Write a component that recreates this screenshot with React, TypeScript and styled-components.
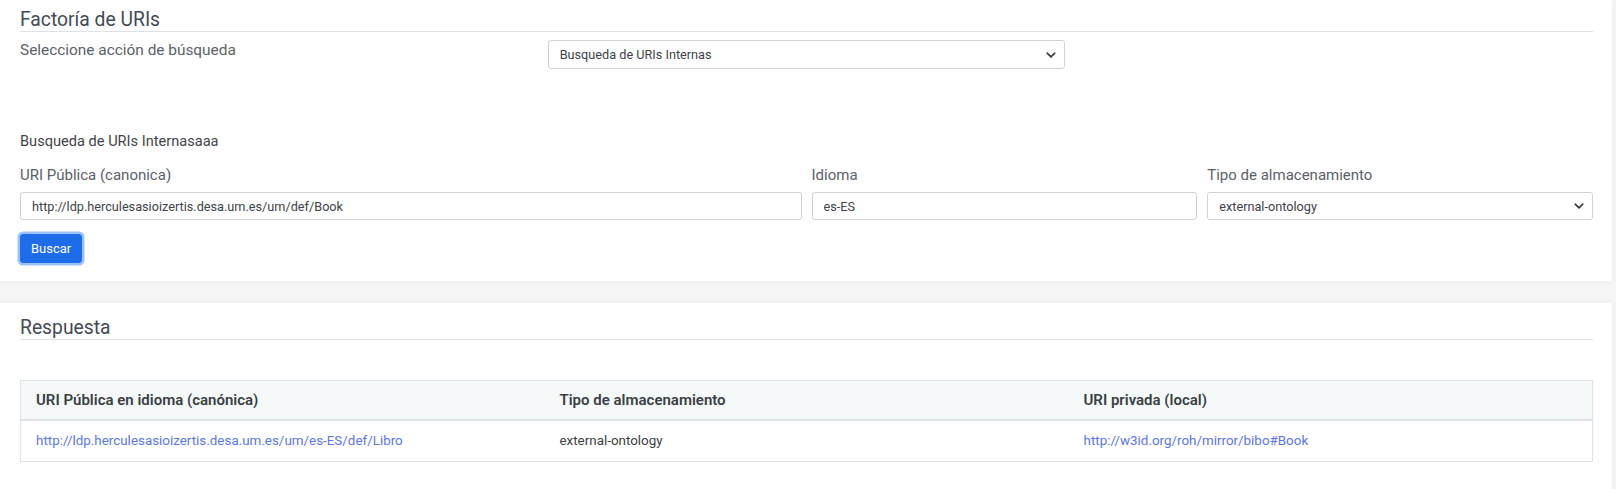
import React from "react";
import styled, { createGlobalStyle } from "styled-components";

const GlobalStyle = createGlobalStyle`
  html, body { margin: 0; padding: 0; }
  body {
    background: #f6f6f6;
    font-family: Roboto, "Liberation Sans", Arial, sans-serif;
    color: #495057;
  }
  * { box-sizing: border-box; }
`;

const Page = styled.div`
  display: flex;
  flex-direction: column;
  gap: 22px;
  padding-right: 4px;
`;

const Card = styled.section<{ $pt: number; $pb: number }>`
  background: #fff;
  box-shadow: 0 0 12px rgba(0, 0, 0, 0.045);
  padding: ${(p) => p.$pt}px 19px ${(p) => p.$pb}px 20px;
`;

const Heading = styled.h2`
  margin: 0;
  font-size: 19.3px;
  font-weight: 400;
  line-height: 20px;
  padding-bottom: 1px;
  color: #434b54;
  border-bottom: 1px solid #dfe2e5;
`;

const Row = styled.div<{ $mt?: number }>`
  display: flex;
  margin: ${(p) => p.$mt ?? 0}px -5px 0;
`;

const Col = styled.div<{ $span: number }>`
  flex: 0 0 ${(p) => (p.$span / 12) * 100}%;
  max-width: ${(p) => (p.$span / 12) * 100}%;
  padding: 0 5px;
`;

const ActionLabel = styled.div`
  font-size: 15.4px;
  line-height: 20px;
  color: #5a6169;
`;

const SelectWrap = styled.div`
  position: relative;
`;

const Select = styled.select<{ $h: number }>`
  appearance: none;
  width: 100%;
  height: ${(p) => p.$h}px;
  border: 1px solid #ced4da;
  border-radius: 3px;
  background: #fff;
  padding: 0 30px 0 11px;
  font-family: inherit;
  font-size: 12.7px;
  color: #3d434a;
  outline: none;
`;

const Chevron = styled.svg`
  position: absolute;
  right: 9px;
  top: 50%;
  width: 10px;
  height: 10px;
  transform: translateY(-50%);
  pointer-events: none;
`;

const SubTitle = styled.div`
  margin-top: 64px;
  font-size: 14.6px;
  line-height: 17px;
  color: #3f454b;
`;

const FieldLabel = styled.label`
  display: block;
  font-size: 15px;
  line-height: 20px;
  color: #5a6169;
  margin-bottom: 7px;
`;

const Input = styled.input`
  width: 100%;
  height: 28px;
  border: 1px solid #ced4da;
  border-radius: 3px;
  padding: 0 11px;
  font-family: inherit;
  font-size: 12.7px;
  color: #3d434a;
  outline: none;
  background: #fff;
`;

const Button = styled.button`
  margin-top: 14px;
  height: 29px;
  padding: 0 10px;
  background: #1d6ce9;
  color: #fff;
  border: 1px solid #1d6ce9;
  border-radius: 3px;
  font-family: inherit;
  font-size: 13px;
  box-shadow: 0 0 0 2.5px #9ec2f8;
  cursor: pointer;
`;

const Table = styled.table`
  margin-top: 40px;
  width: 100%;
  border-collapse: collapse;
  border: 1px solid #dee2e6;
  table-layout: fixed;
`;

const Th = styled.th`
  text-align: left;
  font-size: 15px;
  font-weight: 600;
  color: #3a3f44;
  background: #f6f9fa;
  height: 39px;
  padding: 0 15px;
  border-bottom: 2px solid #dee2e6;
`;

const Td = styled.td`
  height: 42px;
  padding: 0 15px;
  color: #3a3f44;
  font-size: 13.4px;
`;

const Link = styled.a`
  color: #5d76e6;
  text-decoration: none;
`;

const ChevronIcon = () => (
  <Chevron viewBox="0 0 16 16">
    <path
      d="M2 5l6 6 6-6"
      fill="none"
      stroke="#343a40"
      strokeWidth="2.6"
      strokeLinecap="round"
      strokeLinejoin="round"
    />
  </Chevron>
);

export default function App() {
  return (
    <>
      <GlobalStyle />
      <Page>
        <Card $pt={10} $pb={18}>
          <Heading>Factoría de URIs</Heading>
          <Row $mt={8}>
            <Col $span={4}>
              <ActionLabel>Seleccione acción de búsqueda</ActionLabel>
            </Col>
            <Col $span={4}>
              <SelectWrap>
                <Select $h={29} defaultValue="internas">
                  <option value="internas">Busqueda de URIs Internas</option>
                </Select>
                <ChevronIcon />
              </SelectWrap>
            </Col>
          </Row>
          <SubTitle>Busqueda de URIs Internasaaa</SubTitle>
          <Row $mt={15}>
            <Col $span={6}>
              <FieldLabel>URI Pública (canonica)</FieldLabel>
              <Input readOnly defaultValue="http://ldp.herculesasioizertis.desa.um.es/um/def/Book" />
            </Col>
            <Col $span={3}>
              <FieldLabel>Idioma</FieldLabel>
              <Input readOnly defaultValue="es-ES" />
            </Col>
            <Col $span={3}>
              <FieldLabel>Tipo de almacenamiento</FieldLabel>
              <SelectWrap>
                <Select $h={28} defaultValue="ext">
                  <option value="ext">external-ontology</option>
                </Select>
                <ChevronIcon />
              </SelectWrap>
            </Col>
          </Row>
          <Button type="button">Buscar</Button>
        </Card>
        <Card $pt={15} $pb={40}>
          <Heading>Respuesta</Heading>
          <Table>
            <thead>
              <tr>
                <Th>URI Pública en idioma (canónica)</Th>
                <Th>Tipo de almacenamiento</Th>
                <Th>URI privada (local)</Th>
              </tr>
            </thead>
            <tbody>
              <tr>
                <Td>
                  <Link href="#">http://ldp.herculesasioizertis.desa.um.es/um/es-ES/def/Libro</Link>
                </Td>
                <Td>external-ontology</Td>
                <Td>
                  <Link href="#">http://w3id.org/roh/mirror/bibo#Book</Link>
                </Td>
              </tr>
            </tbody>
          </Table>
        </Card>
      </Page>
    </>
  );
}
